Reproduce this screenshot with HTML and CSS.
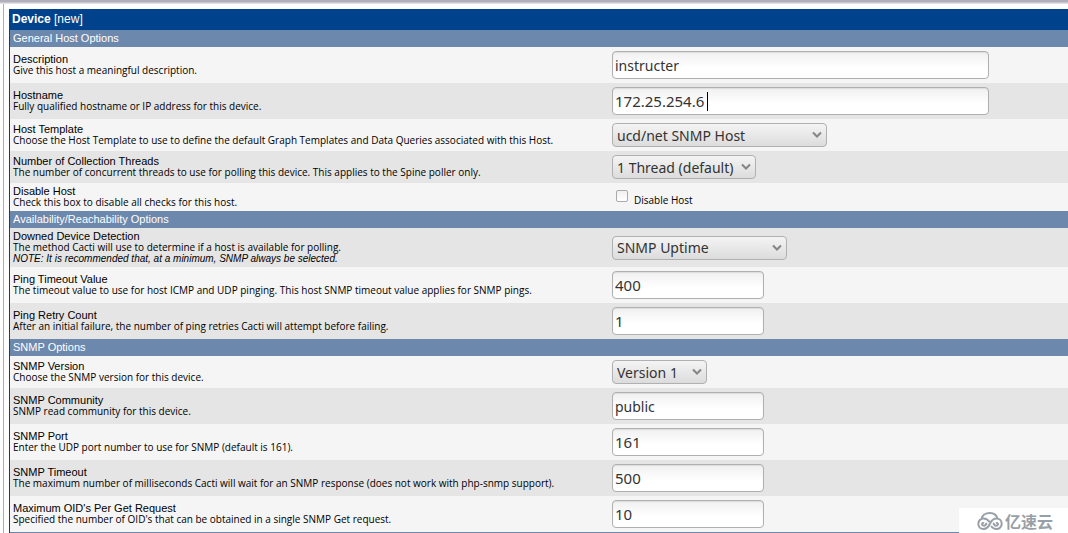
FILE: index.html
```html
<!DOCTYPE html>
<html lang="en">
<head>
<meta charset="utf-8">
<title>Device [new]</title>
<link rel="stylesheet" href="styles.css">
</head>
<body>
<div class="topshade"></div>
<main class="frame">
<form class="panel">
<h1 class="title"><strong>Device</strong> [new]</h1>
<table class="options">
<colgroup><col class="col-label"><col></colgroup>
<tbody>
<tr class="section"><th colspan="2">General Host Options</th></tr>
<tr class="light tall"><td><label class="name" for="description">Description</label><p class="hint">Give this host a meaningful description.</p></td><td><input class="text wide" id="description" type="text" value="instructer"></td></tr>
<tr class="dark tall"><td><label class="name" for="hostname">Hostname</label><p class="hint">Fully qualified hostname or IP address for this device.</p></td><td><span class="field"><input class="text wide numeric" id="hostname" type="text" value="172.25.254.6"><span class="caret"></span></span></td></tr>
<tr class="light mid"><td><label class="name" for="template">Host Template</label><p class="hint">Choose the Host Template to use to define the default Graph Templates and Data Queries associated with this Host.</p></td><td><span class="field"><select class="select w-template" id="template"><option>ucd/net SNMP Host</option></select><svg class="arrow" viewBox="0 0 10 8"><path d="M1 1.5 5 5.5 9 1.5"/></svg></span></td></tr>
<tr class="dark mid"><td><label class="name" for="threads">Number of Collection Threads</label><p class="hint">The number of concurrent threads to use for polling this device. This applies to the Spine poller only.</p></td><td><span class="field"><select class="select w-threads" id="threads"><option>1 Thread (default)</option></select><svg class="arrow" viewBox="0 0 10 8"><path d="M1 1.5 5 5.5 9 1.5"/></svg></span></td></tr>
<tr class="light low"><td><span class="name">Disable Host</span><p class="hint">Check this box to disable all checks for this host.</p></td><td><span class="check"><input class="box" id="disable" type="checkbox"><label class="hint check-label" for="disable">Disable Host</label></span></td></tr>
<tr class="section"><th colspan="2">Availability/Reachability Options</th></tr>
<tr class="dark note"><td><label class="name" for="detection">Downed Device Detection</label><p class="hint">The method Cacti will use to determine if a host is available for polling.</p><p class="hint remark"><em>NOTE: It is recommended that, at a minimum, SNMP always be selected.</em></p></td><td><span class="field"><select class="select w-detection" id="detection"><option>SNMP Uptime</option></select><svg class="arrow" viewBox="0 0 10 8"><path d="M1 1.5 5 5.5 9 1.5"/></svg></span></td></tr>
<tr class="light tall"><td><label class="name" for="ping-timeout">Ping Timeout Value</label><p class="hint">The timeout value to use for host ICMP and UDP pinging. This host SNMP timeout value applies for SNMP pings.</p></td><td><input class="text numeric" id="ping-timeout" type="text" value="400"></td></tr>
<tr class="dark tall"><td><label class="name" for="ping-retry">Ping Retry Count</label><p class="hint">After an initial failure, the number of ping retries Cacti will attempt before failing.</p></td><td><input class="text numeric" id="ping-retry" type="text" value="1"></td></tr>
<tr class="section"><th colspan="2">SNMP Options</th></tr>
<tr class="light mid"><td><label class="name" for="version">SNMP Version</label><p class="hint">Choose the SNMP version for this device.</p></td><td><span class="field"><select class="select w-version" id="version"><option>Version 1</option></select><svg class="arrow" viewBox="0 0 10 8"><path d="M1 1.5 5 5.5 9 1.5"/></svg></span></td></tr>
<tr class="dark tall"><td><label class="name" for="community">SNMP Community</label><p class="hint">SNMP read community for this device.</p></td><td><input class="text" id="community" type="text" value="public"></td></tr>
<tr class="light tall"><td><label class="name" for="port">SNMP Port</label><p class="hint">Enter the UDP port number to use for SNMP (default is 161).</p></td><td><input class="text numeric" id="port" type="text" value="161"></td></tr>
<tr class="dark tall"><td><label class="name" for="timeout">SNMP Timeout</label><p class="hint">The maximum number of milliseconds Cacti will wait for an SNMP response (does not work with php-snmp support).</p></td><td><input class="text numeric" id="timeout" type="text" value="500"></td></tr>
<tr class="light tall"><td><label class="name" for="max-oids">Maximum OID's Per Get Request</label><p class="hint">Specified the number of OID's that can be obtained in a single SNMP Get request.</p></td><td><input class="text numeric" id="max-oids" type="text" value="10"></td></tr>
</tbody>
</table>
</form>
</main>
<div class="watermark">
<svg class="cloud" viewBox="0 0 26 20"><path d="M4.500 8C5 4.500 8.500 2 13 2c3.800 0 6.500 2 7.500 5.500M13 12.500c1.500-3 3.800-5 6.500-5 3 0 5.200 2.300 5.200 5.200S22.400 18 19.500 18c-2.200 0-4-1-5.500-3M19 12.300c1.500-1 2.800 1 1.300 2-2 1-4-.5-3.600-2.500M13 12.500C11.500 16 9.500 18 6.500 18c-3 0-5.200-2.300-5.200-5.200S3.600 7.500 6.500 7.500c2.500 0 4.500 1.200 6 3.500M7 12.300c-1.500-1-2.800 1-1.300 2 2 1 4-.5 3.600-2.500"/></svg>
<span>亿速云</span>
</div>
</body>
</html>
```
FILE: styles.css
```css
* { box-sizing: border-box; }
html { height: 100%; }
body {
  margin: 0;
  height: 100%;
  overflow: hidden;
  background: #fff;
  color: #000;
  font-family: "Liberation Sans", Arial, sans-serif;
  font-size: 11px;
  line-height: 11px;
}
.topshade { height: 4px; background: linear-gradient(#b0b0bd 40%, #f0ecee); }
.frame {
  margin-left: 3px;
  border-left: 1px solid #b3a9b3;
  padding: 5px 0 0 5px;
}
.panel { border-left: 1px solid #00438c; }
.title {
  margin: 0;
  padding: 0 2px;
  background: #00438c;
  color: #fff;
  font-size: 12px;
  line-height: 21px;
  font-weight: normal;
}
.options {
  width: 100%;
  table-layout: fixed;
  border-spacing: 0;
  border-bottom: 2px solid #6d88ad;
}
.col-label { width: 56.9%; }
.options td { padding: 0; vertical-align: middle; }
.options td:first-child { padding-left: 3px; }
.section th {
  height: 17px;
  padding: 0 3px;
  background: #6d88ad;
  color: #fff;
  font-weight: normal;
  text-align: left;
}
.light { background: #f5f5f5; }
.dark { background: #e5e5e5; }
.tall { height: 36px; }
.mid { height: 32px; }
.low { height: 28px; }
.note { height: 39px; }
.name { display: block; }
.hint { margin: 0; font-family: "Open Sans", "Noto Sans", sans-serif; font-size: 10px; }
.remark { font-family: "Liberation Sans", Arial, sans-serif; }
.text, .select {
  display: block;
  max-width: 100%;
  margin: 0;
  border: 1px solid #b0b0b0;
  border-radius: 4px;
  color: #333;
  font-family: "Noto Sans", "Open Sans", sans-serif;
  font-size: 14px;
}
.text {
  width: 152px;
  height: 28px;
  padding: 0 2px;
  background: linear-gradient(#f0f0f0, #fff 60%);
  box-shadow: inset 0 1px 1px #ddd;
}
.numeric { font-size: 15px; }
.wide { width: 377px; }
.select {
  appearance: none;
  height: 24px;
  padding: 0 4px;
  background: linear-gradient(#f4f4f4, #dcdcdc);
}
.w-template { width: 215px; }
.w-threads { width: 144px; }
.w-detection { width: 175px; }
.w-version { width: 95px; }
.field { display: block; width: fit-content; position: relative; }
.arrow {
  position: absolute;
  top: 8px;
  right: 5px;
  width: 10px;
  height: 8px;
  fill: none;
  stroke: #858585;
  stroke-width: 2;
  pointer-events: none;
}
.caret {
  position: absolute;
  top: 5px;
  left: 95px;
  width: 1px;
  height: 19px;
  background: #000;
}
.check { display: flex; align-items: center; gap: 6px; padding-left: 4px; }
.box {
  appearance: none;
  width: 12px;
  height: 12px;
  margin: 0 0 2px;
  border: 1px solid #aaa;
  border-radius: 2px;
  background: linear-gradient(#f0f0f0, #fff);
}
.check-label { padding-top: 6px; }
.watermark {
  position: absolute;
  right: 0;
  bottom: 0;
  width: 109px;
  height: 25px;
  padding-left: 18px;
  display: flex;
  align-items: center;
  gap: 2px;
  background: #fff;
  color: #999fa6;
  font: bold 16px/22px "Noto Sans CJK SC", sans-serif;
}
.cloud { width: 26px; height: 20px; fill: none; stroke: #999fa6; stroke-width: 2; }
```
